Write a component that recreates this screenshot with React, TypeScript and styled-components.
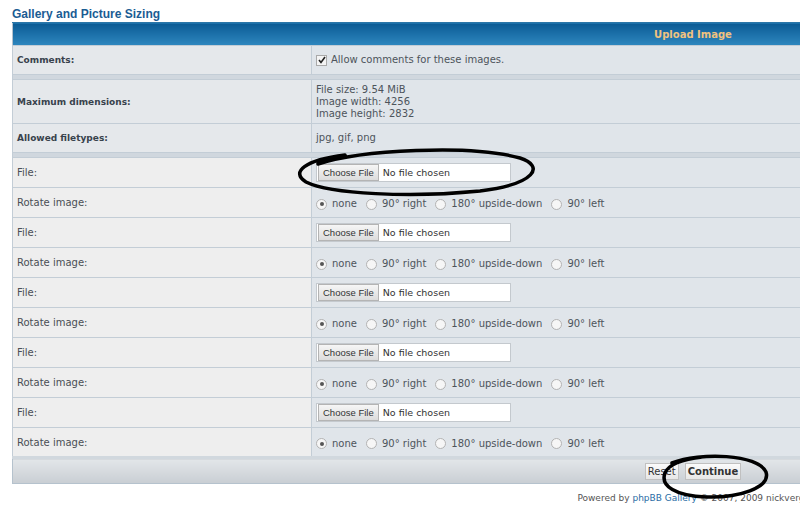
import React from "react";
import styled, { createGlobalStyle } from "styled-components";

const Global = createGlobalStyle`
  html, body { margin: 0; padding: 0; background: #fff; overflow: hidden; }
  body { font-family: "DejaVu Sans", Verdana, sans-serif; }
`;

const Page = styled.div`
  position: relative;
  width: 1380px;
  padding: 7px 0 0 12px;
`;

const Title = styled.h2`
  margin: 0;
  font-family: "Liberation Sans", Arial, sans-serif;
  font-weight: bold;
  font-size: 12px;
  line-height: 15px;
  color: #1b5c93;
`;

const Table = styled.table`
  width: 1362px;
  border-collapse: collapse;
  border: 1px solid #b5c2cd;
  font-size: 10px;
  color: #3d4650;
  table-layout: fixed;
`;

const LabelCol = styled.col`
  width: 299px;
`;

const HeaderCell = styled.th`
  height: 22px;
  padding: 0;
  background: linear-gradient(#0b5b94, #2e87bf);
  border-top: 1px solid #2b76a8;
  color: #f0c27f;
  font-weight: bold;
  font-size: 10px;
  text-align: center;
`;

const Row = styled.tr<{ $h: number }>`
  height: ${(p) => p.$h}px;
`;

const LabelCell = styled.td<{ $strong?: boolean }>`
  padding: 0 0 0 4px;
  border: 1px solid #c3cdd6;
  background: ${(p) => (p.$strong ? "#e5e8eb" : "#eeeeee")};
  font-weight: ${(p) => (p.$strong ? "bold" : "normal")};
  font-size: ${(p) => (p.$strong ? "9px" : "10px")};
  color: ${(p) => (p.$strong ? "#38424c" : "#4a4f55")};
  vertical-align: middle;
`;

const ValueCell = styled.td`
  padding: 0 0 0 4px;
  border: 1px solid #c3cdd6;
  background: #e0e5ea;
  color: #4d545b;
  vertical-align: middle;
  line-height: 12px;
  white-space: nowrap;
`;

const SpacerCell = styled.td<{ $h: number }>`
  height: ${(p) => p.$h}px;
  padding: 0;
  background: #d0d7de;
  border: 1px solid #c3cdd6;
`;

const FooterCell = styled.td`
  height: 24px;
  padding: 0;
  background: linear-gradient(#e2e6e9, #c9ced3);
  border-top: 3px solid #d1d8de;
  text-align: center;
  vertical-align: middle;
`;

const Inline = styled.label`
  display: inline-flex;
  align-items: center;
  vertical-align: middle;
  gap: 5px;
  margin-right: 9px;
  padding-top: 3px;
`;

const CheckInline = styled(Inline)`
  gap: 4px;
  padding-top: 0;
`;

const CheckBox = styled.span`
  display: inline-flex;
  align-items: center;
  justify-content: center;
  width: 9px;
  height: 9px;
  border: 1px solid #a9a9a9;
  background: #f4f4f4;
`;

const Radio = styled.span<{ $on?: boolean }>`
  position: relative;
  display: inline-block;
  width: 9px;
  height: 9px;
  border-radius: 50%;
  border: 1px solid #b3b3b3;
  background: #f6f6f6;
  &::after {
    content: "";
    display: ${(p) => (p.$on ? "block" : "none")};
    position: absolute;
    left: 2.5px;
    top: 2.5px;
    width: 4px;
    height: 4px;
    border-radius: 50%;
    background: #555;
  }
`;

const FileBox = styled.div`
  display: flex;
  align-items: center;
  width: 193px;
  height: 17px;
  border: 1px solid #c4c9ce;
  background: #fff;
  font-size: 9.5px;
`;

const ChooseBtn = styled.span`
  display: flex;
  align-items: center;
  height: 15px;
  margin-left: 1px;
  padding: 0 4px;
  border: 1px solid #b4b4b4;
  background: linear-gradient(#f6f6f6, #dcdcdc);
  color: #333;
  font-family: "Liberation Sans", Arial, sans-serif;
  font-size: 9.5px;
`;

const NoFile = styled.span`
  margin-left: 4px;
  color: #333;
`;

const Btn = styled.span<{ $bold?: boolean }>`
  display: inline-block;
  margin: 0 3px;
  padding: 2px 2px;
  border: 1px solid #c0c0c0;
  background: linear-gradient(#fbfbfb, #e7e7e7);
  font-weight: ${(p) => (p.$bold ? "bold" : "normal")};
  color: #333;
  font-size: 10px;
`;

const Powered = styled.div`
  width: 1362px;
  margin-top: 9px;
  text-align: center;
  font-size: 9px;
  color: #555;
  padding-left: 22px;
  box-sizing: border-box;
`;

const Link = styled.span`
  color: #2a6ca5;
`;

const Overlay = styled.svg`
  position: absolute;
  left: 0;
  top: 0;
  pointer-events: none;
`;

const rotations = [
  { t: "none", on: true },
  { t: "90° right" },
  { t: "180° upside-down" },
  { t: "90° left" },
];

function FileRows() {
  return (
    <>
      <Row $h={30}>
        <LabelCell>File:</LabelCell>
        <ValueCell>
          <FileBox>
            <ChooseBtn>Choose File</ChooseBtn>
            <NoFile>No file chosen</NoFile>
          </FileBox>
        </ValueCell>
      </Row>
      <Row $h={30}>
        <LabelCell>Rotate image:</LabelCell>
        <ValueCell>
          {rotations.map((r) => (
            <Inline key={r.t}>
              <Radio $on={r.on} />
              {r.t}
            </Inline>
          ))}
        </ValueCell>
      </Row>
    </>
  );
}

export default function App() {
  return (
    <>
      <Global />
      <Page>
        <Title>Gallery and Picture Sizing</Title>
        <Table>
          <colgroup>
            <LabelCol />
            <col />
          </colgroup>
          <thead>
            <tr>
              <HeaderCell colSpan={2}>Upload Image</HeaderCell>
            </tr>
          </thead>
          <tbody>
            <Row $h={29}>
              <LabelCell $strong>Comments:</LabelCell>
              <ValueCell>
                <CheckInline>
                  <CheckBox>
                    <svg width="8" height="8" viewBox="0 0 8 8">
                      <path d="M1 4 L3 6.5 L7 1" stroke="#222" strokeWidth="1.6" fill="none" />
                    </svg>
                  </CheckBox>
                  Allow comments for these images.
                </CheckInline>
              </ValueCell>
            </Row>
            <tr>
              <SpacerCell colSpan={2} $h={4} />
            </tr>
            <Row $h={44}>
              <LabelCell $strong>Maximum dimensions:</LabelCell>
              <ValueCell>
                File size: 9.54 MiB
                <br />
                Image width: 4256
                <br />
                Image height: 2832
              </ValueCell>
            </Row>
            <Row $h={29}>
              <LabelCell $strong>Allowed filetypes:</LabelCell>
              <ValueCell>jpg, gif, png</ValueCell>
            </Row>
            <tr>
              <SpacerCell colSpan={2} $h={4} />
            </tr>
            <FileRows />
            <FileRows />
            <FileRows />
            <FileRows />
            <FileRows />
            <tr>
              <FooterCell colSpan={2}>
                <Btn>Reset</Btn>
                <Btn $bold>Continue</Btn>
              </FooterCell>
            </tr>
          </tbody>
        </Table>
        <Powered>
          Powered by <Link>phpBB Gallery</Link> © 2007, 2009 nickvergessen
        </Powered>
        <Overlay width="800" height="517" viewBox="0 0 800 517">
          <path
            d="M318 164 C 360 150, 470 144, 520 158 C 545 166, 536 184, 480 191 C 410 198, 330 194, 306 182 C 290 172, 305 160, 345 155"
            stroke="#000"
            strokeWidth="3.5"
            fill="none"
            strokeLinecap="round"
          />
          <path
            d="M672 463 C 700 452, 758 454, 766 472 C 771 488, 738 498, 706 497 C 676 496, 660 486, 665 473 C 668 465, 682 459, 702 457"
            stroke="#000"
            strokeWidth="3.5"
            fill="none"
            strokeLinecap="round"
          />
        </Overlay>
      </Page>
    </>
  );
}
